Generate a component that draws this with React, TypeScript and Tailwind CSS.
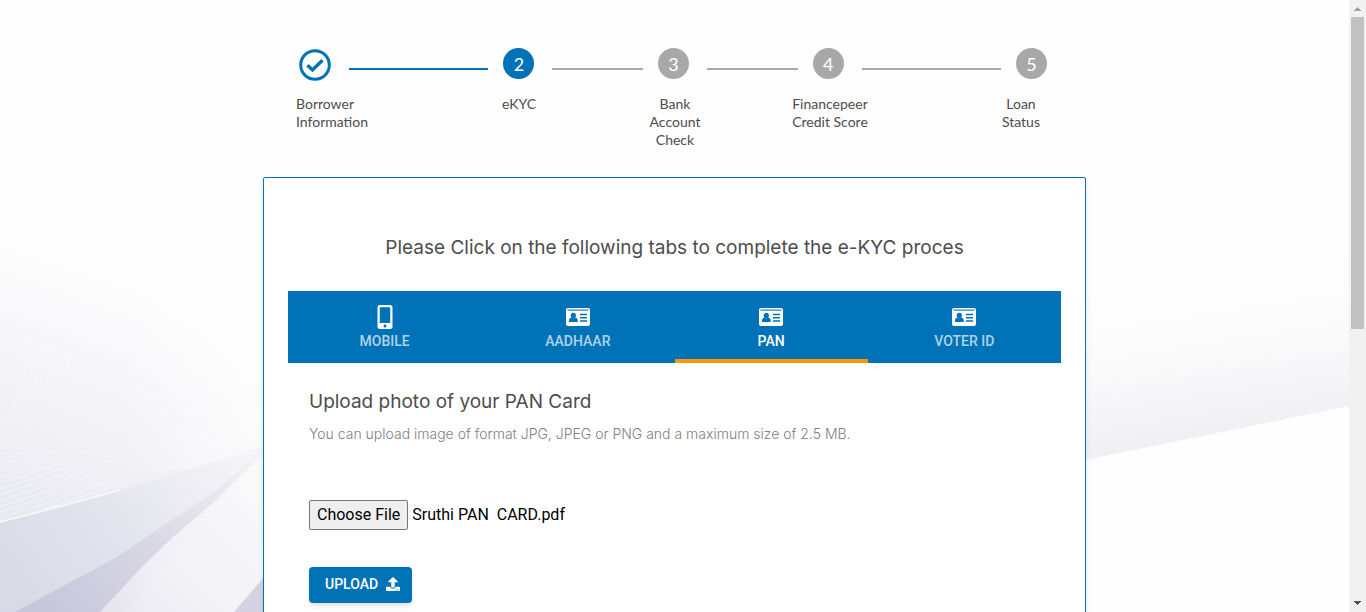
import { useState } from "react";
import { FaMobileAlt, FaUpload } from "react-icons/fa";

const steps = [
  { n: 1, label: ["Borrower", "Information"] },
  { n: 2, label: ["eKYC"] },
  { n: 3, label: ["Bank", "Account", "Check"] },
  { n: 4, label: ["Financepeer", "Credit Score"] },
  { n: 5, label: ["Loan", "Status"] },
];

const connectors = [
  "flex-20 bg-[#0072b8]",
  "flex-13 bg-[#a8a8a8]",
  "flex-13 bg-[#a8a8a8]",
  "flex-20 bg-[#a8a8a8]",
];

function IdCard({ className }: { className?: string }) {
  return (
    <svg className={className} viewBox="0 0 24 24" fill="none" aria-hidden="true">
      <rect x="0" y="3" width="24" height="18" rx="2" fill="#fff" />
      <path d="M1.5 5.1H22.5" stroke="#0072b8" strokeWidth="1.1" />
      <circle cx="7.3" cy="10.4" r="2.6" fill="#0072b8" />
      <path d="M3 16.9V15.6C3 13.6 4.2 12.7 5.6 12.5Q7.3 13.9 9 12.5C10.5 12.7 11.7 13.6 11.7 15.6V16.9Z" fill="#0072b8" />
      <path d="M14 9.5H21M14 12.7H21M14 16H21" stroke="#0072b8" strokeWidth="1.4" />
    </svg>
  );
}

const tabs = [
  { name: "MOBILE", icon: FaMobileAlt },
  { name: "AADHAAR", icon: IdCard },
  { name: "PAN", icon: IdCard },
  { name: "VOTER ID", icon: IdCard },
];

function Backdrop() {
  const waves = Array.from({ length: 18 }, (_, i) => i);
  return (
    <svg
      aria-hidden="true"
      className="absolute inset-0 h-full w-full"
      viewBox="0 0 1349 612"
      preserveAspectRatio="none"
    >
      <defs>
        <linearGradient id="haze" gradientUnits="userSpaceOnUse" x1="150" y1="265" x2="60" y2="520">
          <stop offset="0" stopColor="#fefefe" />
          <stop offset="0.3" stopColor="#f9f9fb" />
          <stop offset="0.65" stopColor="#f2f2f6" />
          <stop offset="1" stopColor="#e9e9f1" />
        </linearGradient>
        <linearGradient id="fade" gradientUnits="userSpaceOnUse" x1="120" y1="0" x2="270" y2="0">
          <stop offset="0" stopColor="#fefefe" stopOpacity="0" />
          <stop offset="1" stopColor="#fefefe" stopOpacity="0.7" />
        </linearGradient>
        <linearGradient id="slab" gradientUnits="userSpaceOnUse" x1="0" y1="612" x2="240" y2="450">
          <stop offset="0" stopColor="#d8d8e6" />
          <stop offset="0.5" stopColor="#e4e4ee" />
          <stop offset="1" stopColor="#f5f4f8" />
        </linearGradient>
        <linearGradient id="fold" gradientUnits="userSpaceOnUse" x1="50" y1="612" x2="264" y2="450">
          <stop offset="0" stopColor="#c8c7db" />
          <stop offset="0.45" stopColor="#d8d7e5" />
          <stop offset="1" stopColor="#f5f4f7" />
        </linearGradient>
        <linearGradient id="light" gradientUnits="userSpaceOnUse" x1="110" y1="612" x2="240" y2="480">
          <stop offset="0" stopColor="#e6e5f0" />
          <stop offset="0.35" stopColor="#f0eff5" />
          <stop offset="1" stopColor="#f8f8fa" />
        </linearGradient>
        <linearGradient id="right" gradientUnits="userSpaceOnUse" x1="1200" y1="275" x2="1225" y2="435">
          <stop offset="0" stopColor="#fefefe" />
          <stop offset="0.5" stopColor="#fafafb" />
          <stop offset="1" stopColor="#f0eff3" />
        </linearGradient>
      </defs>
      <rect width="1349" height="612" fill="#fefefe" />
      <path d="M0 220H270V470L0 530Z" fill="url(#haze)" />
      {waves.map((i) => (
        <path
          key={i}
          d={`M${30 + i * 13} ${335 + i * 6}C${26 + i * 12} ${395 + i * 3} ${i * 6} ${440 + i * 3} -10 ${425 + i * 6}`}
          fill="none"
          stroke="#fff"
          strokeOpacity="0.35"
          strokeWidth="1.2"
        />
      ))}
      <path d="M100 220H270V470H100Z" fill="url(#fade)" />
      <path d="M0 522L110 493L205 465L270 444V612H0Z" fill="url(#slab)" />
      <path d="M0 522Q60 507 120 490" fill="none" stroke="#fff" strokeOpacity="0.8" strokeWidth="1.5" />
      <path d="M15 612L117 557L167 523L213 493L264 448V612Z" fill="url(#fold)" />
      <path d="M100 612L140 569L173 537L213 503L264 453V612Z" fill="url(#light)" />
      <path d="M123 612L165 565L213 507L264 456V612Z" fill="#fff" fillOpacity="0.15" />
      <path d="M234 612L264 577V612Z" fill="#d5d3e1" />
      <path d="M1080 240H1349V406L1080 461Z" fill="url(#right)" />
    </svg>
  );
}

function CheckedCircle() {
  return (
    <svg className="mt-px size-8 shrink-0" viewBox="0 0 32 32" fill="none" role="img" aria-label="Completed">
      <circle cx="16" cy="16" r="14.3" stroke="#0072b8" strokeWidth="3" />
      <path d="M8.5 16.2L13.5 21L23.5 11.3" stroke="#0072b8" strokeWidth="3.4" />
    </svg>
  );
}

function Stepper() {
  return (
    <div className="font-[Lato,sans-serif] text-[#4d4d4d]">
      <div className="flex items-start pl-9 pr-[39px]">
        {steps.map((s, i) => (
          <div key={s.n} className="contents">
            {i === 0 ? (
              <CheckedCircle />
            ) : (
              <span
                className={`flex size-[31px] shrink-0 items-center justify-center rounded-full text-lg text-white ${
                  i === 1 ? "bg-[#0072b8]" : "bg-[#a8a8a8]"
                }`}
              >
                {s.n}
              </span>
            )}
            {i < connectors.length && <span className={`ml-[18px] mr-[15px] mt-5 h-0.5 ${connectors[i]}`} />}
          </div>
        ))}
      </div>
      <ol className="mt-3.5 grid grid-cols-[145fr_156fr_156fr_154fr_133fr] pl-[33px] pr-[46px] text-center text-sm leading-[18px]">
        {steps.map((s, i) => (
          <li key={s.n} className={i === 0 ? "text-left" : i === 4 ? "justify-self-end" : ""}>
            {s.label.map((line) => (
              <span key={line} className="block whitespace-nowrap">
                {line}
              </span>
            ))}
          </li>
        ))}
      </ol>
    </div>
  );
}

function Scrollbar() {
  return (
    <div aria-hidden="true" className="flex w-[17px] shrink-0 flex-col items-center bg-[#f1f1f1]">
      <svg className="h-[17px] w-[17px] shrink-0" viewBox="0 0 17 17" shapeRendering="crispEdges">
        <path d="M8 7h1v1h1v1h1v1h1v1H5v-1h1V9h1V8h1z" fill="#a3a3a3" />
      </svg>
      <div className="h-[51%] w-[13px] bg-[#c1c1c1]" />
      <svg className="mt-auto h-[17px] w-[17px] shrink-0" viewBox="0 0 17 17" shapeRendering="crispEdges">
        <path d="M5 6h7v1h-1v1h-1v1H9v1H8V9H7V8H6V7H5z" fill="#505050" />
      </svg>
    </div>
  );
}

export default function App() {
  const [active, setActive] = useState("PAN");
  const [fileName, setFileName] = useState("Sruthi PAN  CARD.pdf");

  return (
    <div className="flex h-screen overflow-hidden bg-[#fefefe] font-[Roboto,sans-serif]">
      <div className="relative min-w-0 flex-1 overflow-hidden">
        <Backdrop />
        <main className="relative mx-auto max-w-[823px] pt-12">
          <Stepper />
          <section className="mt-7 min-h-screen rounded-xs border border-[#0072b8] bg-white px-6 pt-14 shadow-md">
            <h1 className="text-center font-[Inter,sans-serif] text-[19px] leading-7 text-[#4d4d4d]">
              Please Click on the following tabs to complete the e-KYC proces
            </h1>
            <div role="tablist" className="mt-[29px] grid h-[72px] grid-cols-4 bg-[#0072b8]">
              {tabs.map(({ name, icon: Icon }) => (
                <button
                  key={name}
                  type="button"
                  role="tab"
                  aria-selected={active === name}
                  onClick={() => setActive(name)}
                  className={`flex flex-col items-center border-b-4 pt-3.5 text-sm leading-6 font-medium ${
                    active === name ? "border-[#ff9800] text-white" : "border-transparent text-white/70"
                  }`}
                >
                  <Icon className="size-6 shrink-0 text-white" />
                  {name}
                </button>
              ))}
            </div>
            <div className="px-[21px] pt-[25px]">
              <h2 className="font-[Inter,sans-serif] text-[19px] leading-7 text-[#4d4d4d]">
                Upload photo of your PAN Card
              </h2>
              <p className="mt-1.5 font-[Inter,sans-serif] text-sm leading-6 font-light text-[#808080]">
                You can upload image of format JPG, JPEG or PNG and a maximum size of 2.5 MB.
              </p>
              <label className="mt-[54px] flex w-fit cursor-pointer items-center gap-1 text-base text-black">
                <input
                  type="file"
                  className="peer sr-only"
                  onChange={(e) => setFileName(e.target.files?.[0]?.name ?? "No file chosen")}
                />
                <span className="rounded-xs border border-[#767676] bg-[#efefef] px-[7px] py-0.5 peer-focus-visible:outline-2">
                  Choose File
                </span>
                <span className="whitespace-pre">{fileName}</span>
              </label>
              <button
                type="button"
                className="mt-[37px] flex h-9 items-center gap-2 rounded bg-[#0072b8] pb-0.5 pl-4 pr-3 text-sm font-medium text-white shadow-md"
              >
                UPLOAD
                <FaUpload className="size-3.5" />
              </button>
            </div>
          </section>
        </main>
      </div>
      <Scrollbar />
    </div>
  );
}
